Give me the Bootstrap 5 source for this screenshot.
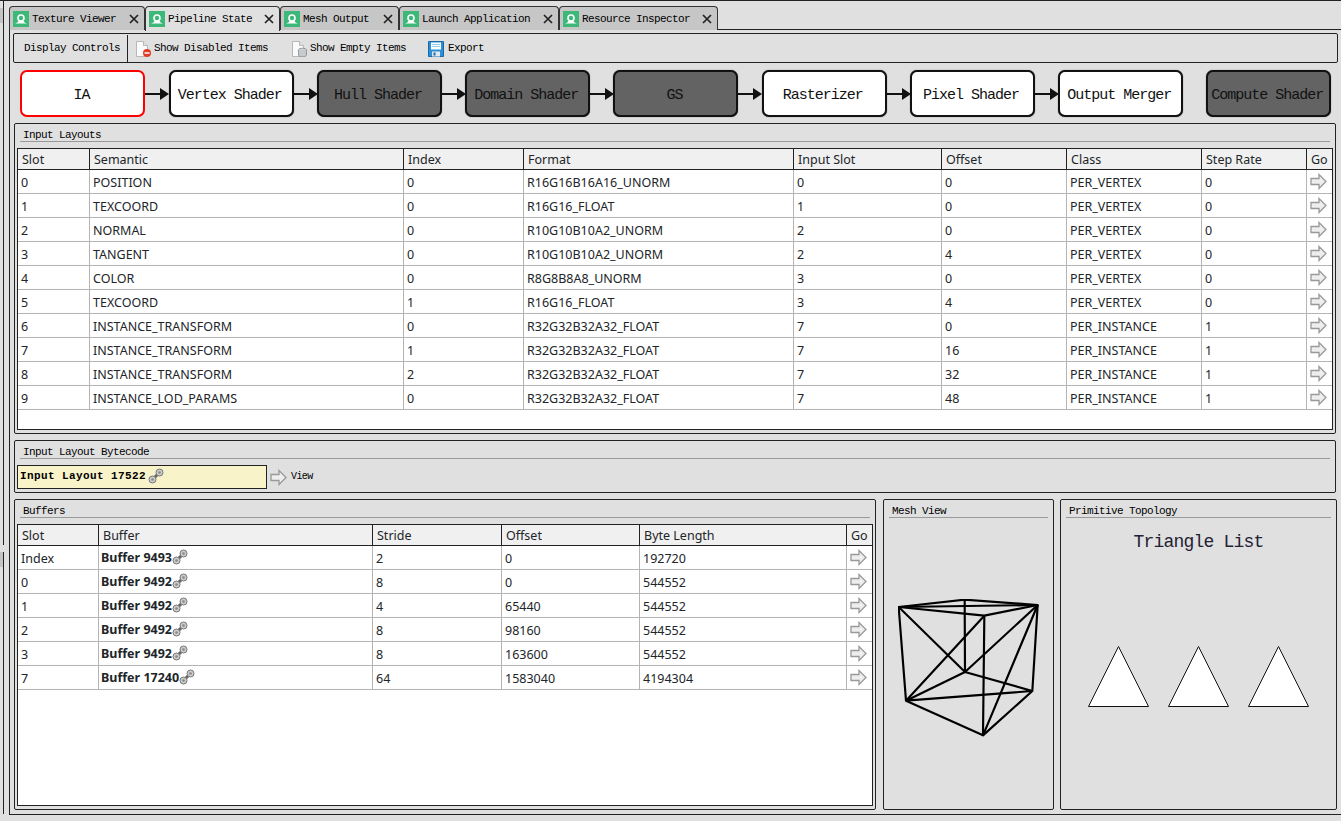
<!DOCTYPE html>
<html lang="en">
<head>
    <meta charset="UTF-8">
    <title>Pipeline State</title>
    <link href="https://cdn.jsdelivr.net/npm/bootstrap@5.3.3/dist/css/bootstrap.min.css" rel="stylesheet">
    <style>
        html, body { height: 821px; overflow: hidden; }
        body { background: #e0e0e0; color: #000; border-top: 1px solid #222; font-family: "Noto Sans", sans-serif; font-size: 12.5px; }
        .mono { font-family: "Liberation Mono", monospace; font-size: 11px; letter-spacing: -.6px; line-height: 1; }

        .side-strip { width: 4px; height: 813px; border-right: 1px solid #222; flex: none; }
        .side-tab { height: 15px; margin-top: 7px; background: #c4c4c4; }
        .side-gap { height: 7px; margin-top: 522px; margin-right: -1px; background: #e0e0e0; }
        .side-tab2 { height: 15px; background: #c4c4c4; }

        .tab-strip { height: 23px; margin-top: 5px; margin-left: 5px; }
        .tab-item { height: 24px; background: #c6c6c6; border: 1px solid #333; border-bottom: 0; border-radius: 4px 4px 0 0; padding: 0 5px 0 3px; gap: 3px; flex: none; position: relative; }
        .tab-item.on { background: #e0e0e0; height: 25px; z-index: 1; }
        .tab-name { flex: 1; padding-top: 1px; white-space: nowrap; }

        .frame { height: 786px; margin-left: 5px; border-top: 1px solid #222; border-left: 1px solid #222; border-bottom: 1px solid #222; padding: 3px 3px 0 3px; }
        .tool-box { height: 30px; width: 1325px; border: 1px solid #222; border-radius: 2px; padding-top: 1px; }
        .tool-label { padding-left: 10px; width: 114px; height: 100%; border-right: 1px solid #222; flex: none; }
        .tool-item { gap: 3px; white-space: nowrap; }
        .tool-first { margin-left: 7px; }
        .tool-empty { margin-left: 23px; }
        .tool-export { margin-left: 22px; gap: 4px; }

        .stage-row { height: 47px; margin: 7px 0 6px 7.4px; }
        .stage { width: 125px; height: 47px; flex: none; background: #fff; border: 2px solid #111; box-shadow: 0 0 1px #444; border-radius: 7px; font-size: 15px; letter-spacing: -1px; padding: 3px 3px 0 0; color: #111; }
        .stage.off { background: #636363; }
        .stage.sel { border-color: #f00; box-shadow: none; }
        .stage-arrow { width: 24px; margin: 0 -.75px 0 0; flex: none; z-index: 1; }
        .stage-last { margin-left: 23px; }

        .box-group { border: 1px solid #222; border-radius: 2px; padding: 0 2px; }
        .box-title { height: 18px; margin: 0 3px; padding: 6px 0 0 3px; border-bottom: 1px solid #999; }
        .layouts-group { height: 311px; margin: 0 2px 6px 1px; }
        .code-group { height: 53px; margin: 0 2px 6px 1px; }
        .lower-row { height: 311px; margin-left: 1px; gap: 7px; }
        .buffers-group { width: 862px; flex: none; }
        .mesh-group { width: 171px; flex: none; margin-right: -1px; }
        .topo-group { width: 277px; flex: none; }

        .table-wrap { background: #fff; border: 1px solid #222; margin-top: 6px; overflow: hidden; }
        .layouts-wrap { height: 282px; width: 1316px; }
        .buffers-wrap { height: 282px; width: 856px; }
        .grid-table { table-layout: fixed; margin: 0; border-collapse: separate; border-spacing: 0; line-height: 1; --bs-table-bg: transparent; }
        .grid-table th { height: 21px; font-weight: 400; vertical-align: middle; background: #f0f0f0; border-bottom: 1px solid #222; border-right: 1px solid #222; padding: 2px 3px 0 4px; white-space: nowrap; overflow: hidden; }
        .grid-table th:last-child { border-right: 0; }
        .grid-table td { height: 24px; vertical-align: middle; border-bottom: 1px solid #b4b4b4; border-right: 1px solid #b4b4b4; padding: 3px 3px 0 3px; white-space: nowrap; }
        .grid-table td:last-child { border-right: 0; padding: 0 0 0 3px; }
        .go-icon { display: block; margin-top: -1px; }
        .buf-name { margin-left: -1px; vertical-align: 1px; }
        .link-icon { vertical-align: -2px; margin-top: -4px; }

        .code-row { margin-top: 6px; }
        .code-field { width: 250px; height: 24px; background: #f9f3c9; border: 1px solid #222; padding: 0 2px 2px; font-weight: 700; font-size: 11px; letter-spacing: .4px; }
        .code-link { margin-left: 2px; }
        .view-btn { margin-left: 3px; gap: 4px; font-size: 10px; }

        .topo-name { font-size: 18px; letter-spacing: -.8px; margin-top: 15px; color: #223; }
        .topo-shapes { margin-top: 95px; gap: 19px; }
        .mesh-pic { margin: 81px 0 0 12px; }
    </style>
</head>
<body class="d-flex">
<svg width="0" height="0" class="position-absolute">
    <symbol id="i-tab" viewBox="0 0 16 16">
        <rect width="16" height="16" fill="#3cb878"/>
        <circle cx="8" cy="7" r="3" fill="none" stroke="#fff" stroke-width="1.6"/>
        <path d="M2 12.500c2-.6 3-1.600 3.500-2.600h5c.5 1 1.500 2 3.500 2.600z" fill="#fff"/>
    </symbol>
    <symbol id="i-close" viewBox="0 0 10 10">
        <path d="M1 1l8 8M9 1l-8 8" stroke="#222" stroke-width="1.700" fill="none"/>
    </symbol>
    <symbol id="i-go" viewBox="0 0 17 17">
        <path d="M1 5.500h8v-4l7 7-7 7v-4H1z" fill="#eee" stroke="#999" stroke-width="1.300"/>
    </symbol>
    <symbol id="i-link" viewBox="0 0 16 16">
        <path d="M5 11l6-6" stroke="#666" stroke-width="3"/>
        <circle cx="11.500" cy="4.500" r="3.500" fill="#ccc" stroke="#777"/>
        <circle cx="11.500" cy="4.500" r="1.300" fill="#888"/>
        <circle cx="4.500" cy="11.500" r="3.500" fill="#ccc" stroke="#777"/>
        <circle cx="4.500" cy="11.500" r="1.300" fill="#888"/>
    </symbol>
    <symbol id="i-page" viewBox="0 0 16 16">
        <path d="M1.500.5h7l4 4v11h-11z" fill="#fafafa" stroke="#b8b8b8"/>
        <path d="M8.500.5v4h4" fill="#e4e4e4" stroke="#b8b8b8"/>
    </symbol>
</svg>

<div class="side-strip">
    <div class="side-tab"></div>
    <div class="side-gap"></div>
    <div class="side-tab2"></div>
</div>

<div class="flex-grow-1 d-flex flex-column">
    <div class="tab-strip d-flex mono">
        <div class="tab-item d-flex align-items-center" style="width:136px"><svg width="16" height="16"><use href="#i-tab"/></svg><span class="tab-name">Texture Viewer</span><svg width="10" height="10"><use href="#i-close"/></svg></div>
        <div class="tab-item on d-flex align-items-center" style="width:135px"><svg width="16" height="16"><use href="#i-tab"/></svg><span class="tab-name">Pipeline State</span><svg width="10" height="10"><use href="#i-close"/></svg></div>
        <div class="tab-item d-flex align-items-center" style="width:119px"><svg width="16" height="16"><use href="#i-tab"/></svg><span class="tab-name">Mesh Output</span><svg width="10" height="10"><use href="#i-close"/></svg></div>
        <div class="tab-item d-flex align-items-center" style="width:160px"><svg width="16" height="16"><use href="#i-tab"/></svg><span class="tab-name">Launch Application</span><svg width="10" height="10"><use href="#i-close"/></svg></div>
        <div class="tab-item d-flex align-items-center" style="width:159px"><svg width="16" height="16"><use href="#i-tab"/></svg><span class="tab-name">Resource Inspector</span><svg width="10" height="10"><use href="#i-close"/></svg></div>
    </div>

    <div class="frame">
        <div class="tool-box d-flex align-items-center mono">
            <div class="tool-label d-flex align-items-center">Display Controls</div>
            <div class="tool-item tool-first d-flex align-items-center">
                <svg width="16" height="16" viewBox="0 0 16 16"><use href="#i-page"/><circle cx="12" cy="12" r="4" fill="#e23c28"/><path d="M9.500 12h5" stroke="#fff" stroke-width="1.500"/></svg>
                <span>Show Disabled Items</span>
            </div>
            <div class="tool-item tool-empty d-flex align-items-center">
                <svg width="16" height="16" viewBox="0 0 16 16"><use href="#i-page"/><ellipse cx="11.500" cy="9" rx="4" ry="1.800" fill="#cfd4d8" stroke="#999"/><path d="M7.500 9v5c0 1 1.800 1.800 4 1.800s4-.8 4-1.800V9" fill="#c4cace" stroke="#999"/></svg>
                <span>Show Empty Items</span>
            </div>
            <div class="tool-item tool-export d-flex align-items-center">
                <svg width="16" height="16" viewBox="0 0 16 16"><path d="M.5.5h15v15H.5z" fill="#2a8fd4" stroke="#1a6aa8"/><path d="M3 1.500h10v7H3z" fill="#fff"/><path d="M4 3.500h8M4 5.500h8" stroke="#9cc6e4"/><path d="M4 10.500h8v5H4z" fill="#dfe8ee"/><path d="M5.500 11.500h2v3h-2z" fill="#1a6aa8"/></svg>
                <span>Export</span>
            </div>
        </div>

        <div class="stage-row d-flex align-items-center mono">
            <div class="stage sel d-flex align-items-center justify-content-center">IA</div>
            <svg class="stage-arrow" height="14" viewBox="0 0 24 14"><path d="M0 7h16" stroke="#111" stroke-width="2"/><path d="M15 1l9 6-9 6z" fill="#111"/></svg>
            <div class="stage d-flex align-items-center justify-content-center">Vertex Shader</div>
            <svg class="stage-arrow" height="14" viewBox="0 0 24 14"><path d="M0 7h16" stroke="#111" stroke-width="2"/><path d="M15 1l9 6-9 6z" fill="#111"/></svg>
            <div class="stage off d-flex align-items-center justify-content-center">Hull Shader</div>
            <svg class="stage-arrow" height="14" viewBox="0 0 24 14"><path d="M0 7h16" stroke="#111" stroke-width="2"/><path d="M15 1l9 6-9 6z" fill="#111"/></svg>
            <div class="stage off d-flex align-items-center justify-content-center">Domain Shader</div>
            <svg class="stage-arrow" height="14" viewBox="0 0 24 14"><path d="M0 7h16" stroke="#111" stroke-width="2"/><path d="M15 1l9 6-9 6z" fill="#111"/></svg>
            <div class="stage off d-flex align-items-center justify-content-center">GS</div>
            <svg class="stage-arrow" height="14" viewBox="0 0 24 14"><path d="M0 7h16" stroke="#111" stroke-width="2"/><path d="M15 1l9 6-9 6z" fill="#111"/></svg>
            <div class="stage d-flex align-items-center justify-content-center">Rasterizer</div>
            <svg class="stage-arrow" height="14" viewBox="0 0 24 14"><path d="M0 7h16" stroke="#111" stroke-width="2"/><path d="M15 1l9 6-9 6z" fill="#111"/></svg>
            <div class="stage d-flex align-items-center justify-content-center">Pixel Shader</div>
            <svg class="stage-arrow" height="14" viewBox="0 0 24 14"><path d="M0 7h16" stroke="#111" stroke-width="2"/><path d="M15 1l9 6-9 6z" fill="#111"/></svg>
            <div class="stage d-flex align-items-center justify-content-center">Output Merger</div>
            <div class="stage stage-last off d-flex align-items-center justify-content-center">Compute Shader</div>
        </div>

        <div class="box-group layouts-group">
            <div class="box-title mono">Input Layouts</div>
            <div class="table-wrap layouts-wrap">
                <table class="table grid-table">
                    <colgroup><col style="width:72px"><col style="width:314px"><col style="width:120px"><col style="width:270px"><col style="width:148px"><col style="width:125px"><col style="width:135px"><col style="width:105px"><col style="width:25px"></colgroup>
                    <thead><tr><th>Slot</th><th>Semantic</th><th>Index</th><th>Format</th><th>Input Slot</th><th>Offset</th><th>Class</th><th>Step Rate</th><th>Go</th></tr></thead>
                    <tbody>
                        <tr><td>0</td><td>POSITION</td><td>0</td><td>R16G16B16A16_UNORM</td><td>0</td><td>0</td><td>PER_VERTEX</td><td>0</td><td><svg class="go-icon" width="17" height="17"><use href="#i-go"/></svg></td></tr>
                        <tr><td>1</td><td>TEXCOORD</td><td>0</td><td>R16G16_FLOAT</td><td>1</td><td>0</td><td>PER_VERTEX</td><td>0</td><td><svg class="go-icon" width="17" height="17"><use href="#i-go"/></svg></td></tr>
                        <tr><td>2</td><td>NORMAL</td><td>0</td><td>R10G10B10A2_UNORM</td><td>2</td><td>0</td><td>PER_VERTEX</td><td>0</td><td><svg class="go-icon" width="17" height="17"><use href="#i-go"/></svg></td></tr>
                        <tr><td>3</td><td>TANGENT</td><td>0</td><td>R10G10B10A2_UNORM</td><td>2</td><td>4</td><td>PER_VERTEX</td><td>0</td><td><svg class="go-icon" width="17" height="17"><use href="#i-go"/></svg></td></tr>
                        <tr><td>4</td><td>COLOR</td><td>0</td><td>R8G8B8A8_UNORM</td><td>3</td><td>0</td><td>PER_VERTEX</td><td>0</td><td><svg class="go-icon" width="17" height="17"><use href="#i-go"/></svg></td></tr>
                        <tr><td>5</td><td>TEXCOORD</td><td>1</td><td>R16G16_FLOAT</td><td>3</td><td>4</td><td>PER_VERTEX</td><td>0</td><td><svg class="go-icon" width="17" height="17"><use href="#i-go"/></svg></td></tr>
                        <tr><td>6</td><td>INSTANCE_TRANSFORM</td><td>0</td><td>R32G32B32A32_FLOAT</td><td>7</td><td>0</td><td>PER_INSTANCE</td><td>1</td><td><svg class="go-icon" width="17" height="17"><use href="#i-go"/></svg></td></tr>
                        <tr><td>7</td><td>INSTANCE_TRANSFORM</td><td>1</td><td>R32G32B32A32_FLOAT</td><td>7</td><td>16</td><td>PER_INSTANCE</td><td>1</td><td><svg class="go-icon" width="17" height="17"><use href="#i-go"/></svg></td></tr>
                        <tr><td>8</td><td>INSTANCE_TRANSFORM</td><td>2</td><td>R32G32B32A32_FLOAT</td><td>7</td><td>32</td><td>PER_INSTANCE</td><td>1</td><td><svg class="go-icon" width="17" height="17"><use href="#i-go"/></svg></td></tr>
                        <tr><td>9</td><td>INSTANCE_LOD_PARAMS</td><td>0</td><td>R32G32B32A32_FLOAT</td><td>7</td><td>48</td><td>PER_INSTANCE</td><td>1</td><td><svg class="go-icon" width="17" height="17"><use href="#i-go"/></svg></td></tr>
                    </tbody>
                </table>
            </div>
        </div>

        <div class="box-group code-group">
            <div class="box-title mono">Input Layout Bytecode</div>
            <div class="code-row d-flex align-items-center">
                <div class="code-field mono d-flex align-items-center">Input Layout 17522<svg width="16" height="16" class="code-link"><use href="#i-link"/></svg></div>
                <div class="view-btn d-flex align-items-center mono"><svg width="17" height="17"><use href="#i-go"/></svg>View</div>
            </div>
        </div>

        <div class="lower-row d-flex">
            <div class="box-group buffers-group">
                <div class="box-title mono">Buffers</div>
                <div class="table-wrap buffers-wrap">
                    <table class="table grid-table">
                        <colgroup><col style="width:81px"><col style="width:274px"><col style="width:129px"><col style="width:138px"><col style="width:207px"><col style="width:25px"></colgroup>
                        <thead><tr><th>Slot</th><th>Buffer</th><th>Stride</th><th>Offset</th><th>Byte Length</th><th>Go</th></tr></thead>
                        <tbody>
                            <tr><td>Index</td><td><b class="buf-name">Buffer 9493</b><svg width="16" height="16" class="link-icon"><use href="#i-link"/></svg></td><td>2</td><td>0</td><td>192720</td><td><svg class="go-icon" width="17" height="17"><use href="#i-go"/></svg></td></tr>
                            <tr><td>0</td><td><b class="buf-name">Buffer 9492</b><svg width="16" height="16" class="link-icon"><use href="#i-link"/></svg></td><td>8</td><td>0</td><td>544552</td><td><svg class="go-icon" width="17" height="17"><use href="#i-go"/></svg></td></tr>
                            <tr><td>1</td><td><b class="buf-name">Buffer 9492</b><svg width="16" height="16" class="link-icon"><use href="#i-link"/></svg></td><td>4</td><td>65440</td><td>544552</td><td><svg class="go-icon" width="17" height="17"><use href="#i-go"/></svg></td></tr>
                            <tr><td>2</td><td><b class="buf-name">Buffer 9492</b><svg width="16" height="16" class="link-icon"><use href="#i-link"/></svg></td><td>8</td><td>98160</td><td>544552</td><td><svg class="go-icon" width="17" height="17"><use href="#i-go"/></svg></td></tr>
                            <tr><td>3</td><td><b class="buf-name">Buffer 9492</b><svg width="16" height="16" class="link-icon"><use href="#i-link"/></svg></td><td>8</td><td>163600</td><td>544552</td><td><svg class="go-icon" width="17" height="17"><use href="#i-go"/></svg></td></tr>
                            <tr><td>7</td><td><b class="buf-name">Buffer 17240</b><svg width="16" height="16" class="link-icon"><use href="#i-link"/></svg></td><td>64</td><td>1583040</td><td>4194304</td><td><svg class="go-icon" width="17" height="17"><use href="#i-go"/></svg></td></tr>
                        </tbody>
                    </table>
                </div>
            </div>

            <div class="box-group mesh-group">
                <div class="box-title mono">Mesh View</div>
                <svg class="mesh-pic d-block" width="144" height="138" viewBox="84 328 432 414" fill="none" stroke="#000" stroke-width="6.500" stroke-linejoin="round">
                    <path d="M86 352L284 330L503 346L343 378Z"/>
                    <path d="M86 352L503 346"/>
                    <path d="M86 352L108 633L339 737L487 604L503 346"/>
                    <path d="M108 633L487 604M108 633L285 547L487 604"/>
                    <path d="M284 330L285 547M343 378L339 737"/>
                    <path d="M86 352L285 547L503 346M343 378L108 633M503 346L339 737"/>
                </svg>
            </div>

            <div class="box-group topo-group">
                <div class="box-title mono">Primitive Topology</div>
                <div class="topo-name mono text-center">Triangle List</div>
                <div class="topo-shapes d-flex justify-content-center">
                    <svg width="61" height="61" viewBox="0 0 61 61"><path d="M30.500.5L60.500 60.500H.5z" fill="#fff" stroke="#111"/></svg>
                    <svg width="61" height="61" viewBox="0 0 61 61"><path d="M30.500.5L60.500 60.500H.5z" fill="#fff" stroke="#111"/></svg>
                    <svg width="61" height="61" viewBox="0 0 61 61"><path d="M30.500.5L60.500 60.500H.5z" fill="#fff" stroke="#111"/></svg>
                </div>
            </div>
        </div>
    </div>
</div>

<script src="https://cdn.jsdelivr.net/npm/bootstrap@5.3.3/dist/js/bootstrap.bundle.min.js"></script>
</body>
</html>
